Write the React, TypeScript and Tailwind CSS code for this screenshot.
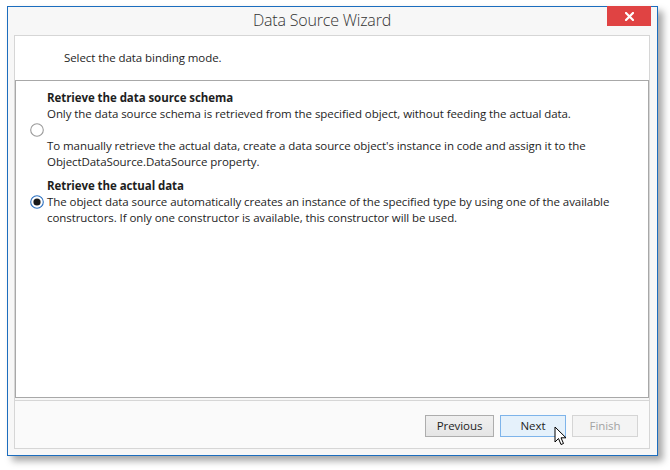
import React from "react";

const font = { fontFamily: '"Open Sans", "Noto Sans", Arial, sans-serif' };

function Radio({ checked }: { checked?: boolean }) {
  return (
    <svg width="14" height="14" viewBox="0 0 14 14" className="shrink-0">
      <circle cx="7" cy="7" r="6.3" fill="#fff" stroke={checked ? "#2a6fc0" : "#9a9a9a"} strokeWidth="1.1" />
      {checked && <circle cx="7" cy="7" r="3.6" fill="#1a1a1a" />}
    </svg>
  );
}

export default function App() {
  return (
    <div className="w-[670px] h-[470px] bg-white pl-[7px] pt-[6px]" style={font}>
      <div className="relative w-[651px] h-[450px] border border-[#1c6dbe] bg-[#f7f7f7] shadow-[5px_5px_7px_rgba(0,0,0,0.35)] flex flex-col">
        {/* title bar */}
        <div className="h-[28px] flex items-start shrink-0">
          <span className="ml-[245px] mt-[3px] text-[16px] leading-[20px] text-[#333] font-light tracking-[-0.2px]">
            Data Source Wizard
          </span>
          <div className="ml-auto mr-[6px] -mt-px w-[44px] h-[20px] bg-[#e04343] flex items-center justify-center">
            <svg width="9" height="9" viewBox="0 0 9 9">
              <path d="M1 1 L8 8 M8 1 L1 8" stroke="#fff" strokeWidth="2.2" strokeLinecap="square" />
            </svg>
          </div>
        </div>
        {/* content box */}
        <div className="ml-[6px] mr-[7px] h-[414px] border border-[#d6d6d6] flex flex-col text-[11.5px] tracking-[-0.07px]">
          <div className="h-[44px] bg-white flex items-center pl-[49px] text-[#1e1e1e]">
            Select the data binding mode.
          </div>
          <div className="h-[318px] border border-[#a8a8a8] bg-white pt-[9px] pl-[14px] leading-[16px] text-[#1e1e1e]">
            <div className="flex items-center">
              <Radio />
              <div className="ml-[3px]">
                <div className="font-bold">Retrieve the data source schema</div>
                <div>Only the data source schema is retrieved from the specified object, without feeding the actual data.</div>
                <div className="h-[16px]" />
                <div>To manually retrieve the actual data, create a data source object's instance in code and assign it to the</div>
                <div>ObjectDataSource.DataSource property.</div>
              </div>
            </div>
            <div className="flex items-center mt-[8px]">
              <Radio checked />
              <div className="ml-[3px]">
                <div className="font-bold">Retrieve the actual data</div>
                <div>The object data source automatically creates an instance of the specified type by using one of the available</div>
                <div>constructors. If only one constructor is available, this constructor will be used.</div>
              </div>
            </div>
          </div>
          <div className="mt-[2px] border-t border-[#d6d6d6] flex-1 bg-[#fafafa] flex justify-end items-start pt-[14px] pr-[11px] gap-[6px]">
            <div className="w-[69px] h-[22px] border border-[#adadad] bg-[linear-gradient(#f0f0f0,#e5e5e5)] flex items-center justify-center text-[#1e1e1e]">
              Previous
            </div>
            <div className="relative w-[66px] h-[22px] border border-[#7eb4ea] bg-[#e5f1fb] flex items-center justify-center text-[#1e1e1e]">
              Next
              <svg className="absolute left-[53px] top-[10px]" width="14" height="21" viewBox="0 0 14 21">
                <path d="M1 1 L1 16 L4.5 12.5 L7 18.5 L9.5 17.5 L7 11.8 L12 11.8 Z" fill="#fff" stroke="#000" strokeWidth="1" strokeLinejoin="round" />
              </svg>
            </div>
            <div className="w-[66px] h-[22px] border border-[#d5d5d5] bg-[#f4f4f4] flex items-center justify-center text-[#a3a3a3]">
              Finish
            </div>
          </div>
        </div>
      </div>
    </div>
  );
}
